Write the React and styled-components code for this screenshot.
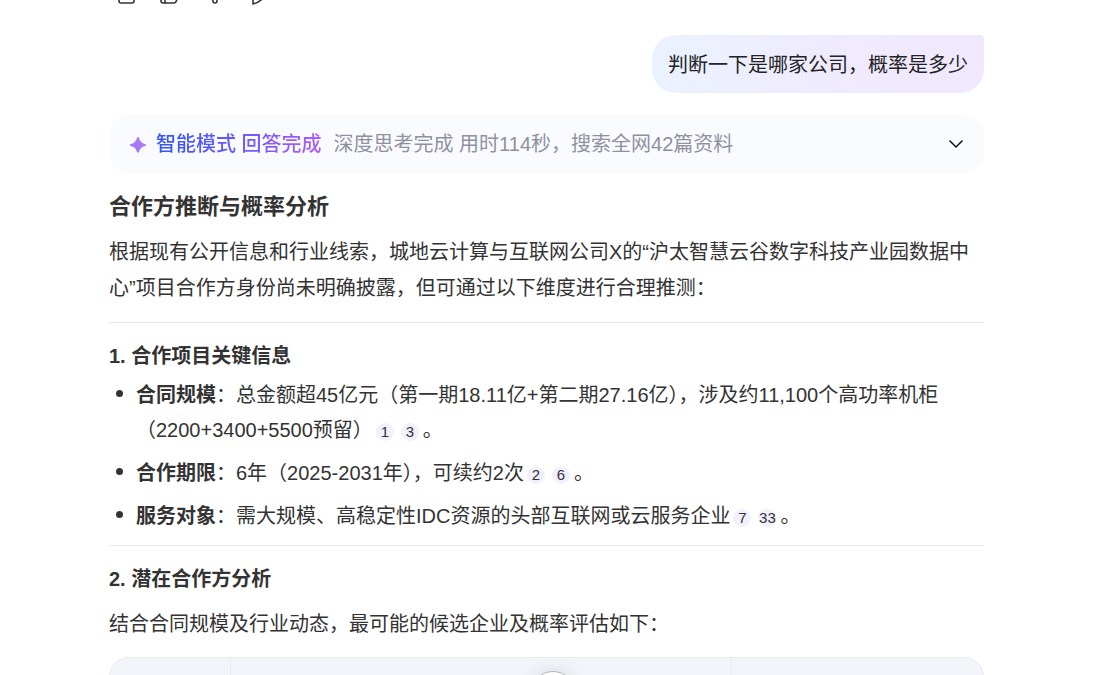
import styled, { createGlobalStyle } from "styled-components";

const GlobalStyle = createGlobalStyle`
  * {
    box-sizing: border-box;
  }

  body {
    margin: 0;
    background: #fff;
    color: #333;
    font-family: "Liberation Sans", "Noto Sans CJK SC", sans-serif;
    font-size: 20px;
  }
`;

const Page = styled.div`
  height: 100vh;
  overflow: hidden;
  padding: 0 119px 0 109px;
`;

// only the lower edge of the previous answer's buttons is in view
const Actions = styled.div`
  display: flex;
  align-items: flex-end;
  gap: 20px;
  height: 7px;
  padding-left: 4px;
  overflow: hidden;
`;

const IconButton = styled.button`
  display: flex;
  flex: none;
  padding: 0;
  border: 0;
  background: none;
  color: #333;
  cursor: pointer;
`;

const Question = styled.div`
  width: fit-content;
  margin: 28px 0 22px auto;
  padding: 12px 16px 10px;
  border-radius: 24px 4px 24px 24px;
  background: linear-gradient(100deg, #eaf2ff 0%, #efebfe 50%, #f1e8ff 100%);
  color: #222;
  line-height: 36px;
`;

const Status = styled.button`
  display: flex;
  align-items: center;
  width: 100%;
  height: 58px;
  padding: 0 19px 0 20px;
  border: 0;
  border-radius: 20px;
  background: #fafbff;
  font: inherit;
  text-align: left;
  cursor: pointer;
`;

const Mode = styled.span`
  margin: 0 12px 0 9px;
  padding-bottom: 3px;
  background: linear-gradient(90deg, #3355f5 0%, #6a58ff 50%, #b05cf5 100%);
  background-clip: text;
  color: transparent;
  font-weight: 500;
`;

const Meta = styled.span`
  flex: 1;
  padding-bottom: 3px;
  color: #8f919f;
`;

const Title = styled.h2`
  margin: 16px 0 9px;
  font-size: 22px;
  line-height: 36px;
`;

const SubTitle = styled.h3`
  margin: 15px 0 4px;
  font-size: 20px;
  line-height: 36px;
`;

const Text = styled.p`
  margin: 9px 0 0;
  line-height: 36px;
`;

const Divider = styled.hr`
  margin: ${(props) => (props.$tight ? "11px" : "16px")} 0 0;
  border: 0;
  border-top: 1px solid #e9e9eb;
`;

const List = styled.ul`
  display: flex;
  flex-direction: column;
  gap: 8px;
  margin: 0;
  padding: 0;
  line-height: 35px;
  list-style: none;
`;

const Item = styled.li`
  display: flex;
  gap: 13px;
  padding-left: 7px;

  &::before {
    content: "";
    flex: none;
    width: 7px;
    height: 7px;
    margin-top: 12px;
    border-radius: 50%;
    background: #333;
  }
`;

const Cite = styled.a`
  display: inline-block;
  min-width: 18px;
  height: 18px;
  margin: 0 4px 0 3px;
  border-radius: 9px;
  background: #f1f0ff;
  color: #333;
  font-size: 15px;
  line-height: 18px;
  text-align: center;
  text-decoration: none;
`;

const TableWrap = styled.div`
  position: relative;
  margin-top: 15px;
`;

const Table = styled.table`
  width: 100%;
  table-layout: fixed;
  border: 1px solid #e9eaee;
  border-radius: 20px;
  border-spacing: 0;
  background: #f4f5fa;
`;

const HeadCell = styled.th`
  width: ${(props) => props.$width || "auto"};
  height: 52px;
  border-left: ${(props) => (props.$first ? "0" : "1px solid #e9eaee")};
`;

const ScrollButton = styled.button`
  position: absolute;
  top: 14px;
  left: calc(50% - 16px);
  width: 44px;
  height: 44px;
  border: 1px solid #b4b4be;
  border-radius: 50%;
  background: #fff;
  box-shadow: 0 0 20px rgba(0, 0, 0, 0.12);
`;

const actions = [
  {
    label: "复制",
    paths: ["M9 5V3h13v12", "M6 7h15v11a2 2 0 0 1-2 2H8a2 2 0 0 1-2-2z"],
  },
  {
    label: "赞",
    paths: ["M4 8h4v12H6a2 2 0 0 1-2-2z", "M8 8l4-6c3 0 3 2 2 6h8l-2 8q-1 4-3 4H8"],
  },
  {
    label: "踩",
    paths: ["M5 3h14l2 11h-5v4q0 2-2 2T12 18l-2-4H5z"],
  },
  {
    label: "分享",
    paths: ["M8 21V14C5 14 3 14 2 15 2 10 4 7 8 7V1l14 10q-6 8-14 10z"],
  },
];

const items = [
  {
    name: "合同规模",
    text: "总金额超45亿元（第一期18.11亿+第二期27.16亿），涉及约11,100个高功率机柜（2200+3400+5500预留）",
    cites: [1, 3],
  },
  { name: "合作期限", text: "6年（2025-2031年），可续约2次", cites: [2, 6] },
  {
    name: "服务对象",
    text: "需大规模、高稳定性IDC资源的头部互联网或云服务企业",
    cites: [7, 33],
  },
];

const App = () => {
  return (
    <>
      <GlobalStyle />
      <Page lang="zh-CN">
        <Actions>
          {actions.map((action) => (
            <IconButton key={action.label} aria-label={action.label}>
              <svg width="24" height="24" viewBox="0 0 24 24" fill="none" stroke="currentColor" strokeWidth="1.6" strokeLinejoin="round">
                {action.paths.map((d) => (
                  <path key={d} d={d} />
                ))}
              </svg>
            </IconButton>
          ))}
        </Actions>

        <Question>判断一下是哪家公司，概率是多少</Question>

        <Status aria-expanded="false">
          <svg width="18" height="18" viewBox="0 0 18 18">
            <defs>
              <linearGradient id="spark" x1="0" y1="1" x2="1" y2="0">
                <stop offset="0" stopColor="#8d78f5" />
                <stop offset="1" stopColor="#c07cf2" />
              </linearGradient>
            </defs>
            <path
              fill="url(#spark)"
              d="M9 2Q10 2 10.200 3.200Q11.300 7.800 16 8.900 17.200 9.200 17.200 10T16 11.100Q11.300 12.200 10.200 16.400 10 17.600 9 17.600T7.800 16.400Q6.700 12.200 2 11.100.8 10.800.8 10T2 8.900Q6.700 7.800 7.800 3.200 8 2 9 2z"
            />
          </svg>
          <Mode>智能模式 回答完成</Mode>
          <Meta>深度思考完成 用时114秒，搜索全网42篇资料</Meta>
          <svg width="18" height="18" viewBox="0 0 18 18" fill="none" stroke="#111" strokeWidth="1.5">
            <path d="M2.500 5.500L9 12l6.500-6.500" />
          </svg>
        </Status>

        <Title>合作方推断与概率分析</Title>
        <Text>
          根据现有公开信息和行业线索，城地云计算与互联网公司X的“沪太智慧云谷数字科技产业园数据中心”项目合作方身份尚未明确披露，但可通过以下维度进行合理推测：
        </Text>
        <Divider />

        <SubTitle>1. 合作项目关键信息</SubTitle>
        <List>
          {items.map((item) => (
            <Item key={item.name}>
              <div>
                <strong>{item.name}</strong>：{item.text}
                {item.cites.map((cite) => (
                  <Cite key={cite} href={`#ref-${cite}`}>{cite}</Cite>
                ))}
                。
              </div>
            </Item>
          ))}
        </List>
        <Divider $tight />

        <SubTitle>2. 潜在合作方分析</SubTitle>
        <Text>结合合同规模及行业动态，最可能的候选企业及概率评估如下：</Text>
        <TableWrap>
          <Table>
            <thead>
              <tr>
                <HeadCell $first $width="120px" />
                <HeadCell />
                <HeadCell $width="252px" />
              </tr>
            </thead>
          </Table>
          <ScrollButton aria-label="回到底部" />
        </TableWrap>
      </Page>
    </>
  );
};

export default App;
